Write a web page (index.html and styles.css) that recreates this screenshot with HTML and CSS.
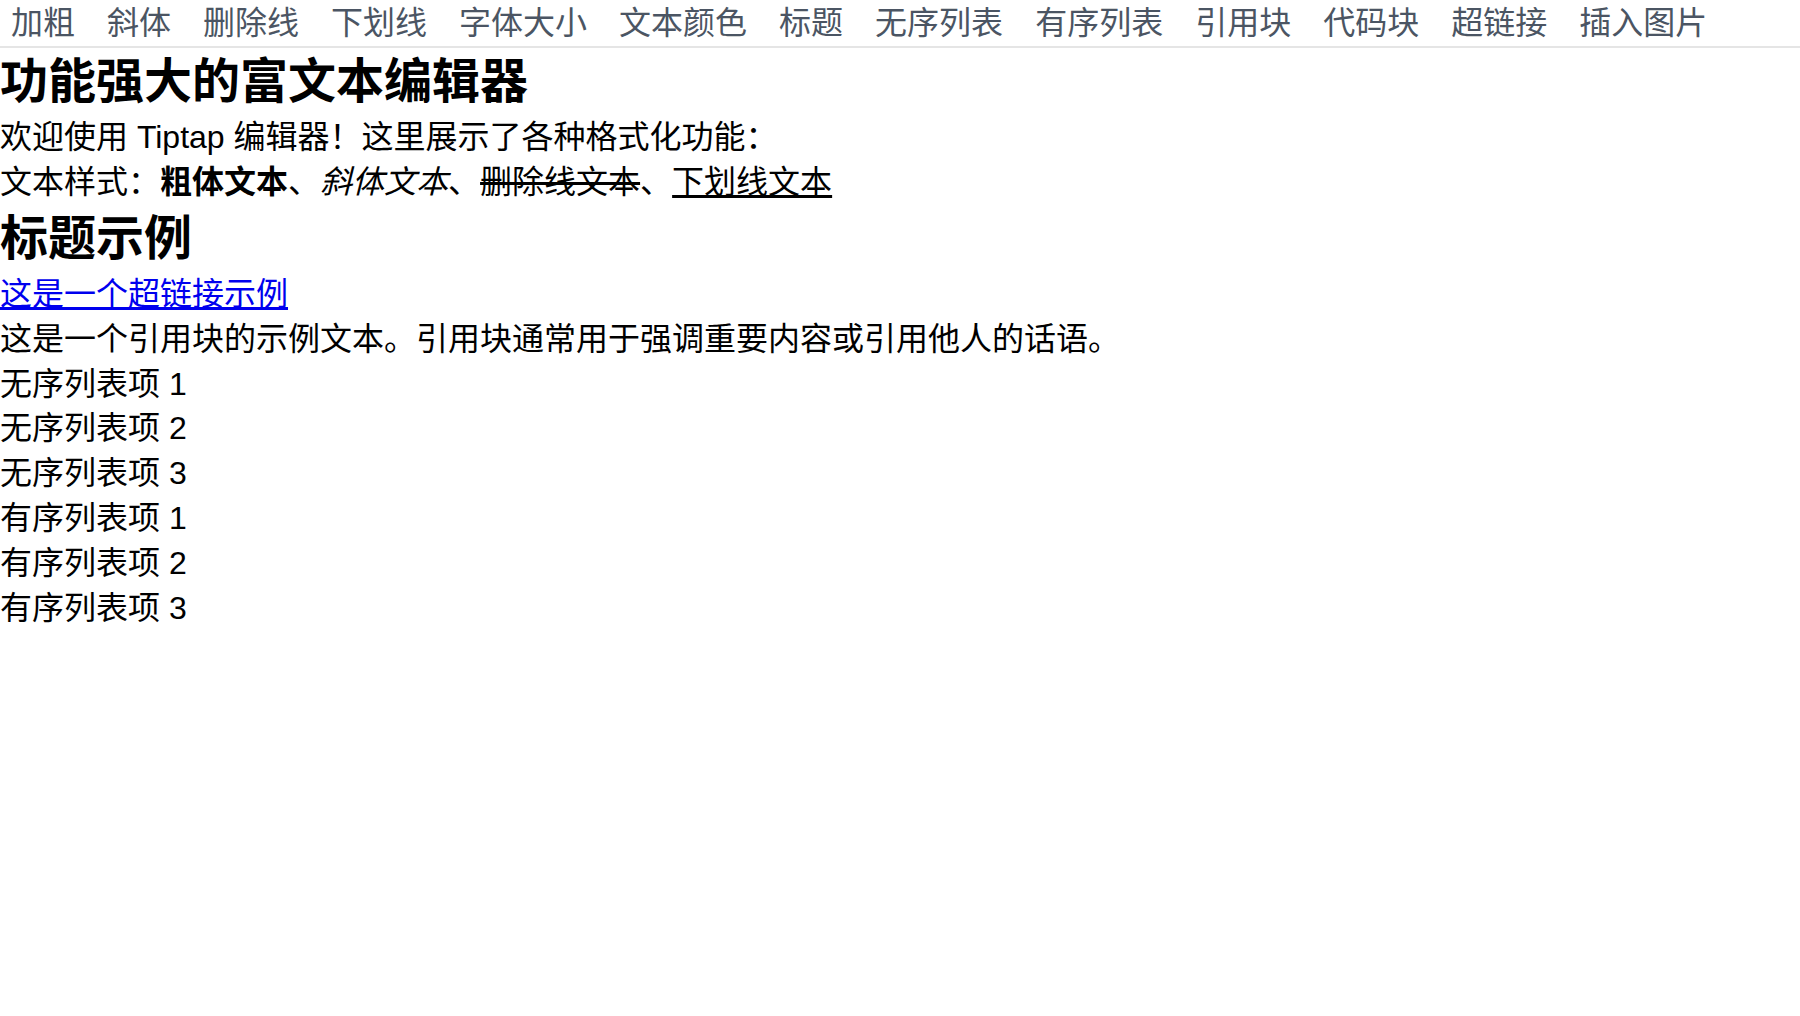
FILE: index.html
```html
<!DOCTYPE html>
<html>
<head>
    <meta charset="utf-8">
    <title>Tiptap 编辑器</title>
    <link rel="stylesheet" href="styles.css">
</head>
<body>
    <div class="toolbar">
        <button type="button">加粗</button>
        <button type="button">斜体</button>
        <button type="button">删除线</button>
        <button type="button">下划线</button>
        <button type="button">字体大小</button>
        <button type="button">文本颜色</button>
        <button type="button">标题</button>
        <button type="button">无序列表</button>
        <button type="button">有序列表</button>
        <button type="button">引用块</button>
        <button type="button">代码块</button>
        <button type="button">超链接</button>
        <button type="button">插入图片</button>
    </div>
    <div class="editor">
        <h1>功能强大的富文本编辑器</h1>
        <p>欢迎使用 Tiptap 编辑器！这里展示了各种格式化功能：</p>
        <p>文本样式：<strong>粗体文本</strong>、<em>斜体文本</em>、<s>删除线文本</s>、<u>下划线文本</u></p>
        <h2>标题示例</h2>
        <p><a href="#">这是一个超链接示例</a></p>
        <blockquote>
            <p>这是一个引用块的示例文本。引用块通常用于强调重要内容或引用他人的话语。</p>
        </blockquote>
        <ul>
            <li>无序列表项 1</li>
            <li>无序列表项 2</li>
            <li>无序列表项 3</li>
        </ul>
        <ol>
            <li>有序列表项 1</li>
            <li>有序列表项 2</li>
            <li>有序列表项 3</li>
        </ol>
    </div>
</body>
</html>
```

FILE: styles.css
```css
body {
    margin: 0;
    font-family: "Liberation Sans", "Noto Sans CJK SC", sans-serif;
    font-size: 32px;
    line-height: 1.4;
    color: #000;
    background: #fff;
}

.toolbar {
    display: flex;
    gap: 10px;
    height: 46px;
    border-bottom: 2px solid #e5e5e5;
}
.toolbar button {
    padding: 0 11px;
    border: none;
    background: none;
    font-family: inherit;
    font-size: 32px;
    line-height: 46px;
    color: #4b5563;
    cursor: pointer;
}

.editor h1,
.editor h2 {
    margin: 0;
    font-size: 48px;
    line-height: 1.4;
    font-weight: bold;
}
.editor p {
    margin: 0;
}
.editor a {
    color: #0000ee;
}
.editor blockquote {
    margin: 0;
}
.editor ul,
.editor ol {
    margin: 0;
    padding: 0;
    list-style: none;
}
```
